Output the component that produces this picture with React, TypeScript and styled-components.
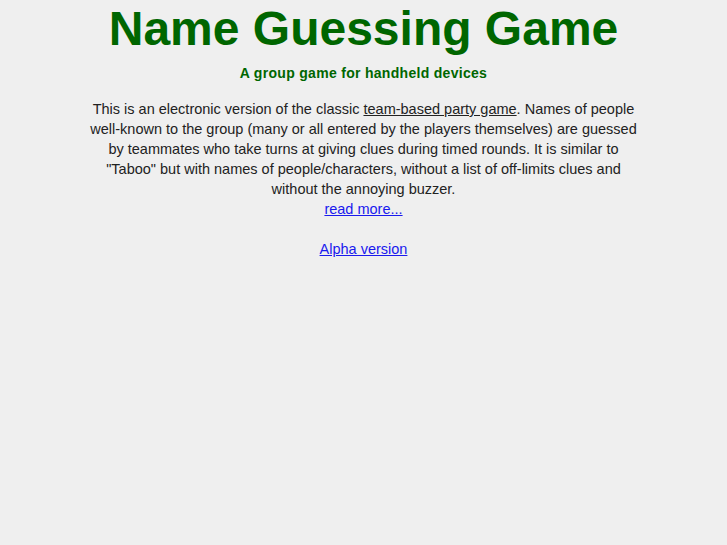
import React from 'react';
import styled, { createGlobalStyle } from 'styled-components';

const GlobalStyle = createGlobalStyle`
  html, body {
    margin: 0;
    padding: 0;
    background: #efefef;
  }
  body {
    font-family: "Liberation Sans", Arial, sans-serif;
    color: #222;
  }
`;

const Page = styled.div`
  display: flex;
  flex-direction: column;
  align-items: center;
  text-align: center;
`;

const Title = styled.h1`
  margin: 1px 0 0;
  font-size: 48px;
  line-height: 56px;
  font-weight: bold;
  color: #006600;
`;

const Tagline = styled.h2`
  margin: 6px 0 0;
  font-size: 14px;
  line-height: 20px;
  letter-spacing: 0.3px;
  font-weight: bold;
  color: #006600;
`;

const Intro = styled.p`
  width: 550px;
  margin: 16px 0 0;
  font-size: 14.5px;
  line-height: 20px;
`;

const PlainLink = styled.a`
  color: #222;
  text-decoration: underline;
`;

const Link = styled.a`
  color: #1a1aee;
  text-decoration: underline;
`;

const App = () => (
  <>
    <GlobalStyle />
    <Page>
      <Title>Name Guessing Game</Title>
      <Tagline>A group game for handheld devices</Tagline>
      <Intro>
        This is an electronic version of the classic{' '}
        <PlainLink href="#">team-based party game</PlainLink>. Names of people
        well-known to the group (many or all entered by the players themselves)
        are guessed by teammates who take turns at giving clues during timed
        rounds. It is similar to "Taboo" but with names of people/characters,
        without a list of off-limits clues and without the annoying buzzer.
        <br />
        <Link href="#">read more...</Link>
        <br />
        <br />
        <Link href="#">Alpha version</Link>
      </Intro>
    </Page>
  </>
);

export default App;
